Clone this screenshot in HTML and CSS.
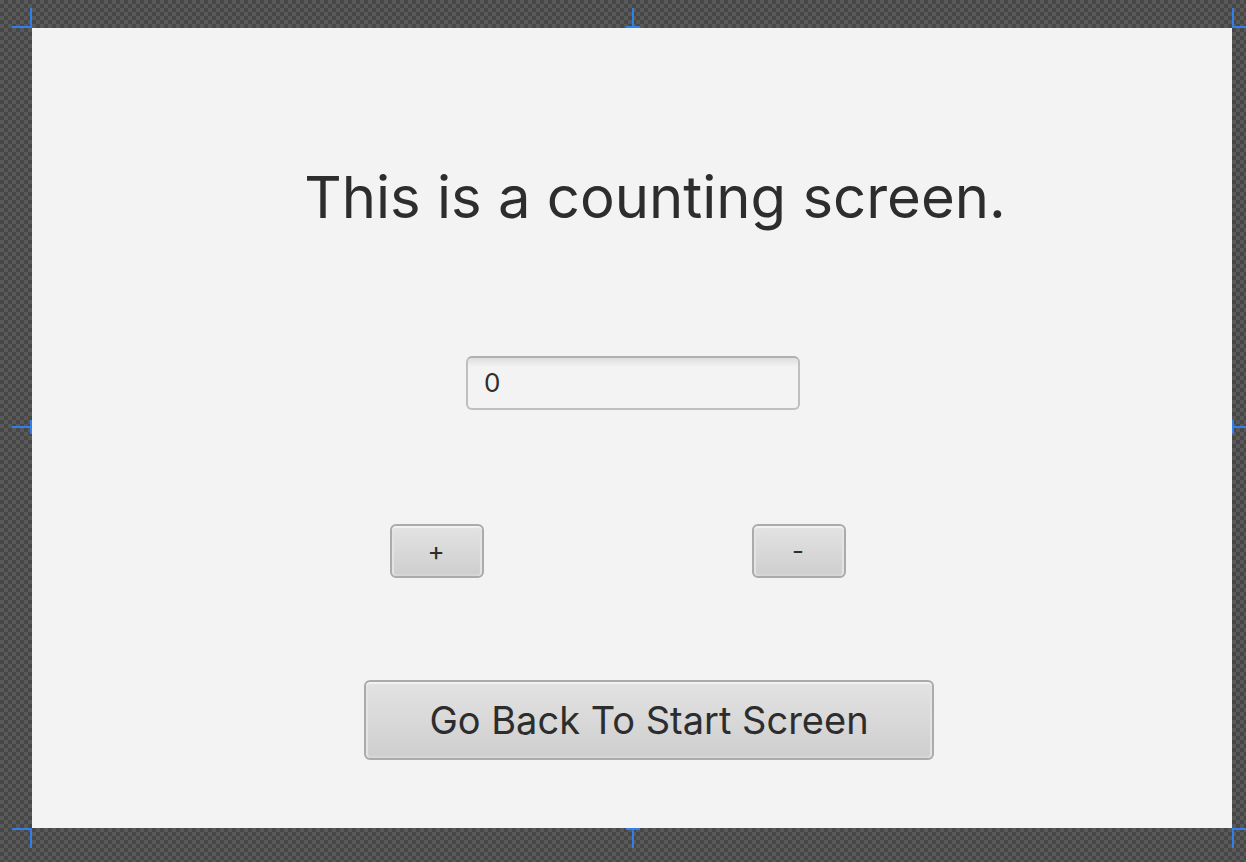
FILE: index.html
```
<!DOCTYPE html>
<html lang="en">
<head>
<meta charset="utf-8">
<title>Counting screen</title>
<link rel="stylesheet" href="styles.css">
</head>
<body>
<main class="stage">
  <h1 class="title">This is a counting screen.</h1>
  <input class="count" type="text" value="0" aria-label="Count">
  <div class="steps">
    <button class="button" type="button">+</button>
    <button class="button" type="button">-</button>
  </div>
  <button class="button back" type="button">Go Back To Start Screen</button>

  <svg class="mark top left" viewBox="0 0 20 20"><path d="M0 19H19V0"/></svg>
  <svg class="mark top middle" viewBox="0 0 20 20"><path d="M10 0V19M3 19H17"/></svg>
  <svg class="mark top right" viewBox="0 0 20 20"><path d="M1 0V19H20"/></svg>
  <svg class="mark center left" viewBox="0 0 20 20"><path d="M0 10H19M19 3V17"/></svg>
  <svg class="mark center right" viewBox="0 0 20 20"><path d="M20 10H1M1 3V17"/></svg>
  <svg class="mark bottom left" viewBox="0 0 20 20"><path d="M0 1H19V20"/></svg>
  <svg class="mark bottom middle" viewBox="0 0 20 20"><path d="M10 20V1M3 1H17"/></svg>
  <svg class="mark bottom right" viewBox="0 0 20 20"><path d="M1 20V1H20"/></svg>
</main>
</body>
</html>
```
FILE: styles.css
```
* { box-sizing: border-box; }

body {
  margin: 0;
  min-height: 100vh;
  padding: 28px 14px 34px 32px;
  overflow-x: hidden;
  background: repeating-conic-gradient(#474747 0 25%, #595959 0 50%) 0 0 / 8px 8px;
  color: #2d2d2d;
  font-family: Inter, "Liberation Sans", sans-serif;
}

.stage {
  position: relative;
  display: flex;
  flex-direction: column;
  align-items: center;
  padding: 133px 0 68px;
  background: #f3f3f3;
}

.title {
  margin: 0 0 123px;
  padding-left: 46px;
  font-size: 58px;
  font-weight: 400;
  line-height: 72px;
}

.count {
  width: 334px;
  height: 54px;
  margin-left: 2px;
  padding: 0 16px 2px;
  border: 2px solid #bfbfbf;
  border-top-color: #b0b0b0;
  border-radius: 6px;
  background: linear-gradient(#dedede, #f3f3f3 9px);
  color: inherit;
  font: 26px "Inter", sans-serif;
}

.steps {
  display: flex;
  justify-content: space-between;
  width: 456px;
  margin: 114px 28px 102px 0;
}

.button {
  min-width: 94px;
  height: 54px;
  padding: 0 2px 2px 0;
  border: 2px solid #ababab;
  border-radius: 6px;
  background: linear-gradient(#e3e3e3, #cecece);
  box-shadow: inset 0 2px #f1f1f1, inset 2px 0 #e3e3e3, inset -2px 0 #e3e3e3, inset 0 -2px #d6d6d6;
  color: inherit;
  font: 26px "Inter", sans-serif;
}

.back {
  width: 570px;
  height: 80px;
  margin-left: 34px;
  padding: 0;
  font-size: 38px;
}

.mark {
  position: absolute;
  width: 20px;
  height: 20px;
  fill: none;
  stroke: #2f80ea;
  stroke-width: 2px;
}

.top { bottom: 100%; }
.bottom { top: 100%; }
.center { top: calc(50% - 11px); }
.left { right: 100%; }
.right { left: 100%; }
.middle { left: calc(50% - 9px); }
```
